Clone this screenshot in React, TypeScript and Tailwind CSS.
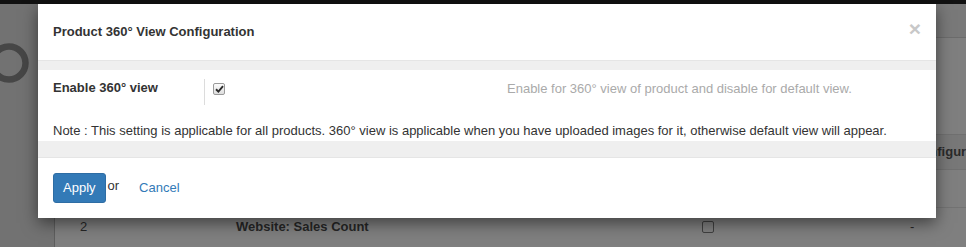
export default function App() {
  return (
    <div className="relative h-[247px] w-[966px] overflow-hidden bg-[#7f7f7f] font-['Liberation_Sans',Arial,sans-serif] text-[13px]">
      {/* page behind the overlay */}
      <div className="h-[4px] bg-[#111]" />
      <div className="flex h-[243px]">
        <aside className="w-[55px] shrink-0 border-r border-[#5e5e5e] bg-[#727272]">
          <svg width="30" height="44" viewBox="0 0 30 44" className="mt-[38px]">
            <circle cx="9" cy="21" r="16.5" fill="none" stroke="#464646" strokeWidth="6.5" />
          </svg>
        </aside>
        <main className="flex-1">
          <div className="h-[34px] border-b border-[#6c6c6c] bg-[#797979]" />
          <div className="h-[96px]" />
          <div className="flex h-[36px] items-center border-y border-[#707070] bg-[#787878] pl-[857px] font-bold text-[#2a2a2a]">
            Configuration
          </div>
          <div className="h-[38px] border-b border-[#737373]" />
          <div className="flex items-start pt-[10px] leading-[18px] text-[#262626]">
            <span className="ml-[25px] w-[156px]">2</span>
            <span className="w-[466px] font-bold">Website: Sales Count</span>
            <span className="mt-[3px] h-[12px] w-[12px] rounded-[2px] border border-[#404040]" />
            <span className="ml-[196px]">-</span>
          </div>
        </main>
      </div>

      {/* modal */}
      <div className="absolute left-[38px] top-[4px] w-[898px] bg-white text-[#333] shadow-[0_5px_15px_rgba(0,0,0,0.5)]">
        <div className="relative h-[57px] border-b border-[#e5e5e5] px-[15px] pt-[19px]">
          <h4 className="font-bold leading-[18px]">Product 360° View Configuration</h4>
          <button className="absolute right-[15px] top-[14px] text-[21px] font-bold leading-[21px] text-[#c8c8c8]">×</button>
        </div>
        <div className="bg-[#efefef] pt-[9px] pb-[16px]">
          <div className="bg-white px-[15px] pt-[9px] pb-[1px]">
            <div className="flex items-start leading-[18px]">
              <label className="w-[151px] font-bold">Enable 360° view</label>
              <span className="h-[26px] border-l border-[#dcdcdc]" />
              <span className="ml-[8px] mt-[4px] flex h-[12px] w-[12px] items-center justify-center rounded-[2px] border border-[#9a9a9a] bg-gradient-to-b from-[#fcfcfc] to-[#dedede]">
                <svg width="9" height="8" viewBox="0 0 9 8">
                  <path d="M1 4.3 L3.4 6.6 L8 1.2" fill="none" stroke="#2b2b2b" strokeWidth="1.9" />
                </svg>
              </span>
              <span className="ml-[282px] mt-[1px] text-[#aaa]">Enable for 360° view of product and disable for default view.</span>
            </div>
            <p className="mt-[17px] leading-[18px]">
              Note : This setting is applicable for all products. 360° view is applicable when you have uploaded images for it, otherwise default view will appear.
            </p>
          </div>
        </div>
        <div className="flex h-[61px] items-start border-t border-[#e5e5e5] px-[15px] pt-[15px]">
          <button className="h-[30px] rounded-[3px] border border-[#2e6da4] bg-[#337ab7] px-[9px] leading-[18px] text-white">Apply</button>
          <span className="ml-[2px] mt-[4px] leading-[18px] text-[#333]">or</span>
          <a className="ml-[20px] mt-[6px] leading-[18px] text-[#337ab7]">Cancel</a>
        </div>
      </div>
    </div>
  )
}
